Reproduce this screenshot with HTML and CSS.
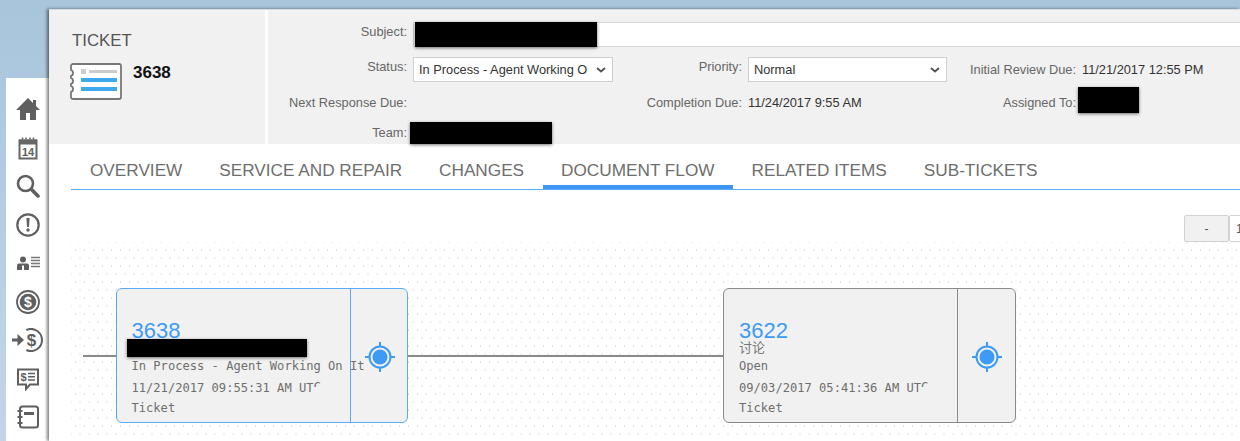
FILE: index.html
```html
<!DOCTYPE html>
<html lang="en">
<head>
<meta charset="utf-8">
<title>Ticket 3638</title>
<link rel="stylesheet" href="styles.css">
</head>
<body>
<div class="page">
  <nav class="rail">
    <svg class="ico" viewBox="0 0 24 24"><path d="M12 1 0 13h4v10h6v-7h4v7h6V13h4l-4-4V3h-3v3z" fill="#5f5f5f"/></svg>
    <svg class="ico" viewBox="0 0 24 24"><path d="M3.500 4.500h17v18h-17z" fill="#fff" stroke="#666" stroke-width="2"/><path d="M3 3.500h18v5H3z" fill="#666"/><path d="M6.500 1.500v2M10 1.500v2M14 1.500v2M17.500 1.500v2" stroke="#666" stroke-width="1.600"/><text class="icotext" x="12" y="20" font-size="11">14</text></svg>
    <svg class="ico" viewBox="0 0 24 24"><circle cx="9.500" cy="9.500" r="7.500" fill="none" stroke="#5f5f5f" stroke-width="2.600"/><path d="m15.500 15.500 6.500 6.500" stroke="#5f5f5f" stroke-width="3.600" stroke-linecap="round"/></svg>
    <svg class="ico" viewBox="0 0 24 24"><circle cx="12" cy="12" r="10.700" fill="none" stroke="#5f5f5f" stroke-width="2.200"/><path d="M10.400 5h3.200l-.6 9h-2z" fill="#5f5f5f"/><circle cx="12" cy="17" r="1.700" fill="#5f5f5f"/></svg>
    <svg class="ico" viewBox="0 0 24 24"><circle cx="7" cy="8.500" r="3" fill="#5f5f5f"/><path d="M1 19v-4.500a2 2 0 0 1 2-2h8a2 2 0 0 1 2 2V19H8v-4.500H6V19z" fill="#5f5f5f"/><path d="M15 6.500h9M15 9.500h9M15 12.500h9M15 15.500h9" stroke="#777" stroke-width="1.500"/></svg>
    <svg class="ico" viewBox="0 0 24 24"><circle cx="12" cy="12" r="11" fill="none" stroke="#5f5f5f" stroke-width="1.800"/><circle cx="12" cy="12" r="8.300" fill="#5f5f5f"/><text class="icotext icotext-light" x="12" y="17" font-size="14">$</text></svg>
    <svg class="ico ico-wide" viewBox="0 0 32 24"><path d="M14.400 2A11 11 0 1 1 14.400 22" fill="none" stroke="#5f5f5f" stroke-width="2"/><path d="M0 10.500h5.500V6l6.500 6-6.500 6v-4.500H0z" fill="#5f5f5f"/><text class="icotext" x="19.500" y="18" font-size="17">$</text></svg>
    <svg class="ico" viewBox="0 0 24 24"><path d="M2 2.500h20v15h-8l-4 4.500v-4.500H2z" fill="none" stroke="#5f5f5f" stroke-width="2"/><text class="icotext" x="7.500" y="14" font-size="11">$</text><path d="M12 6.500h7M12 9.700h7M12 12.900h7" stroke="#5f5f5f" stroke-width="1.500"/></svg>
    <svg class="ico" viewBox="0 0 24 24"><rect x="4" y="1.500" width="18" height="21" rx="2.500" fill="none" stroke="#5f5f5f" stroke-width="2"/><path d="M8 7h10v3H8z" fill="#5f5f5f"/><path d="M1.500 6h5M1.500 12h5M1.500 18h5" stroke="#5f5f5f" stroke-width="2"/></svg>
  </nav>
  <main class="main">
    <header class="head">
      <div class="summary">
        <h1 class="kind">TICKET</h1>
        <div class="idrow">
          <svg class="ticket" viewBox="0 0 52 37"><path d="M3 1h46a2 2 0 0 1 2 2v31a2 2 0 0 1-2 2H3a2 2 0 0 1-2-2v-5a3 3 0 0 0 2-3 3 3 0 0 0-2-3v-2a3 3 0 0 0 2-3 3 3 0 0 0-2-3v-2a3 3 0 0 0 2-3 3 3 0 0 0-2-3V3a2 2 0 0 1 2-2z" fill="#fff" stroke="#777" stroke-width="1.800"/><rect x="11" y="6" width="5" height="5" fill="#ccc"/><rect x="19" y="7" width="28" height="3" fill="#ccc"/><rect x="11" y="15" width="36" height="4" fill="#3fa9ee"/><rect x="11" y="24" width="36" height="4" fill="#3fa9ee"/></svg>
          <span class="idnum">3638</span>
        </div>
      </div>
      <div class="fields">
        <span class="lab lab-up">Subject:</span>
        <div class="subject"><span class="mask mask-subject"></span></div>
        <span class="lab lab-up">Status:</span>
        <div class="select"><span class="seltext">In Process - Agent Working O</span><svg class="chev" viewBox="0 0 10 6"><path d="m1 1 4 3.500L9 1" fill="none" stroke="#555" stroke-width="2"/></svg></div>
        <span class="lab lab-up">Priority:</span>
        <div class="select"><span class="seltext">Normal</span><svg class="chev" viewBox="0 0 10 6"><path d="m1 1 4 3.500L9 1" fill="none" stroke="#555" stroke-width="2"/></svg></div>
        <span class="lab">Initial Review Due:</span>
        <span class="val">11/21/2017 12:55 PM</span>
        <span class="lab">Next Response Due:</span>
        <span class="val"></span>
        <span class="lab">Completion Due:</span>
        <span class="val">11/24/2017 9:55 AM</span>
        <span class="lab">Assigned To:</span>
        <span class="val slot"><span class="mask mask-assigned"></span></span>
        <span class="lab">Team:</span>
        <span class="val slot"><span class="mask mask-team"></span></span>
      </div>
    </header>
    <div class="tabs">
      <a class="tab">OVERVIEW</a>
      <a class="tab">SERVICE AND REPAIR</a>
      <a class="tab">CHANGES</a>
      <a class="tab tab-on">DOCUMENT FLOW</a>
      <a class="tab">RELATED ITEMS</a>
      <a class="tab">SUB-TICKETS</a>
    </div>
    <div class="zoombar">
      <button class="zbtn">-</button>
      <button class="zbtn zval">100%</button>
    </div>
    <section class="canvas">
      <div class="line line-a"></div>
      <div class="line line-b"></div>
      <article class="node node-on node-a">
        <div class="nbody">
          <a class="nnum">3638</a>
          <div class="nsub"><span class="mask mask-node"></span></div>
          <div class="nline">In Process - Agent Working On It</div>
          <div class="nline">11/21/2017 09:55:31 AM UT<span class="cut">C</span></div>
          <div class="nline">Ticket</div>
        </div>
        <div class="nside"><svg class="target" viewBox="0 0 32 32"><circle cx="16" cy="16" r="10.500" fill="none" stroke="#3d9bf5" stroke-width="2"/><circle cx="16" cy="16" r="7.500" fill="#3d9bf5"/><path d="M16 1v5M16 26v5M1 16h5M26 16h5" stroke="#3d9bf5" stroke-width="2"/></svg></div>
      </article>
      <article class="node node-b">
        <div class="nbody">
          <a class="nnum">3622</a>
          <div class="nsub">讨论</div>
          <div class="nline">Open</div>
          <div class="nline">09/03/2017 05:41:36 AM UT<span class="cut">C</span></div>
          <div class="nline">Ticket</div>
        </div>
        <div class="nside"><svg class="target" viewBox="0 0 32 32"><circle cx="16" cy="16" r="10.500" fill="none" stroke="#3d9bf5" stroke-width="2"/><circle cx="16" cy="16" r="7.500" fill="#3d9bf5"/><path d="M16 1v5M16 26v5M1 16h5M26 16h5" stroke="#3d9bf5" stroke-width="2"/></svg></div>
      </article>
    </section>
  </main>
</div>
</body>
</html>
```

FILE: styles.css
```css
* { box-sizing: border-box; }
html, body { margin: 0; height: 100%; overflow: hidden; }
body {
  background: linear-gradient(180deg, #a8c5dc 0, #c3d6e8 100%);
  font-family: "Liberation Sans", Arial, sans-serif;
  color: #333;
}
.page { display: flex; align-items: flex-start; width: 1240px; height: 441px; overflow: hidden; }

.rail {
  flex: none;
  width: 43px;
  height: 363px;
  margin: 78px 0 0 6px;
  padding-top: 19px;
  background: #fff;
  display: flex;
  flex-direction: column;
  align-items: center;
  gap: 14.500px;
}
.ico { display: block; width: 24px; height: 24px; flex: none; }
.ico-wide { width: 32px; }
.icotext { font-family: "Liberation Sans", Arial, sans-serif; font-weight: 700; text-anchor: middle; fill: #5f5f5f; }
.icotext-light { fill: #fff; }

.main {
  flex: none;
  width: 1191px;
  margin-top: 9px;
  height: 432px;
  background: #fff;
  box-shadow: -2px 0 3px rgba(0,0,0,.5);
  overflow: hidden;
}
.head { display: flex; height: 135px; background: #f1f1f1; border-top: 1px solid #dcdcdc; }
.summary { flex: none; width: 216px; padding: 21px 0 0 23px; }
.kind { margin: 0; font-size: 16.800px; line-height: 20px; font-weight: 400; color: #555; }
.idrow { display: flex; align-items: flex-start; margin-top: 12px; gap: 11px; }
.ticket { width: 52px; height: 37px; flex: none; margin-left: -2px; }
.idnum { font-size: 17px; font-weight: 700; color: #111; line-height: 20px; }

.fields {
  flex: 1;
  border-left: 3px solid #fff;
  display: grid;
  grid-template-columns: 139px 200px 123px 199px 123px 1fr;
  column-gap: 6px;
  grid-template-rows: 25px 25px 20px 20px;
  row-gap: 10px;
  padding-top: 12px;
  font-size: 12.800px;
  align-items: center;
}
.lab { text-align: right; color: #666; white-space: nowrap; }
.lab-up { padding-bottom: 6px; }
.val { color: #333; white-space: nowrap; }
.slot { position: relative; height: 20px; }
.subject {
  grid-column: 2 / -1;
  height: 25px;
  width: 900px;
  position: relative;
  background: #fff;
  border: 1px solid #d6d6d6;
}
.select {
  height: 25px;
  display: flex;
  align-items: center;
  justify-content: space-between;
  padding: 0 6px 0 5px;
  background: #fff;
  border: 1px solid #cfcfcf;
  color: #333;
}
.chev { width: 10px; height: 6px; }
.mask { position: absolute; background: #000; box-shadow: 0 1px 3px rgba(0,0,0,.55); display: block; }
.mask-subject { left: 1px; top: -1px; width: 182px; height: 25px; }
.mask-assigned { left: -4px; top: -5px; width: 61px; height: 26px; }
.mask-team { left: -3px; top: 0; width: 142px; height: 22px; }

.tabs { display: flex; gap: 1px; height: 46px; margin-left: 22px; padding-left: 1px; border-bottom: 1px solid #59aaf7; align-items: stretch; }
.tab { padding: 16px 18px 0; font-size: 17.200px; line-height: 20px; color: #6e6e6e; white-space: nowrap; }
.tab-on { border-bottom: 4px solid #3d96f5; }

.zoombar { display: flex; justify-content: flex-start; gap: 0; height: 27px; margin: 25px 0 0 1135px; width: 200px; }
.zbtn { flex: none; width: 45px; height: 27px; padding: 0; font: 12px "Liberation Sans", sans-serif; color: #555; background: #f1f1f1; border: 1px solid #d2d2d2; border-radius: 2px; }
.zval { background: #fff; text-align: left; padding-left: 6px; width: 60px; }

.canvas {
  position: relative;
  height: 240px;
  margin-left: 22px;
  background-image: radial-gradient(circle, #e2e2e2 0.7px, transparent 1.100px), radial-gradient(circle, #e2e2e2 0.7px, transparent 1.100px);
  background-size: 9px 16px;
  background-position: 0 0, 4.500px 8px;
}
.line { position: absolute; height: 1.500px; background: #8a8a8a; top: 113px; }
.line-a { left: 12px; width: 33px; }
.line-b { left: 337px; width: 316px; }
.node {
  position: absolute;
  top: 46px;
  width: 292.500px;
  height: 135px;
  display: flex;
  border: 1.500px solid #8a8a8a;
  border-radius: 6px;
  background: #f1f1f1;
}
.node-a { left: 44.500px; }
.node-b { left: 652px; }
.node-on { border-color: #5aa9f5; }
.nbody { flex: none; width: 234px; padding: 30px 0 0 15px; white-space: nowrap; border-right: 1.500px solid #8a8a8a; }
.node-on .nbody { border-right-color: #5aa9f5; }
.nside { flex: 1; display: flex; align-items: center; justify-content: center; padding: 2px 0 0 2px; }
.target { width: 32px; height: 32px; }
.nnum { display: block; font-size: 22px; line-height: 24px; color: #3d9bf5; }
.nsub { position: relative; height: 12px; font: 13px/8px "Noto Sans CJK SC", sans-serif; color: #777; margin-bottom: 1px; }
.mask-node { left: -5px; top: -4px; width: 180px; height: 18px; }
.nline { font: 12.100px/20.500px "DejaVu Sans Mono", monospace; color: #6e6e6e; }
.cut { display: inline-block; height: 10px; line-height: 20.500px; overflow: hidden; vertical-align: 4.800px; }
```
